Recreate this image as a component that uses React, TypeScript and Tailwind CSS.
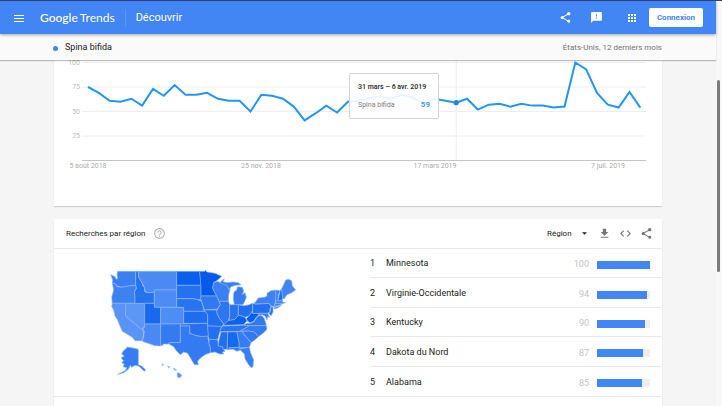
import React, { useState } from "react";

const interest = [
  75, 69, 61, 60, 63, 56, 73, 66, 77, 67, 67, 69, 63, 61, 61, 50, 67, 66, 63, 55, 41, 48, 56, 49, 60, 61,
  64, 65, 63, 67, 64, 58, 63, 61, 59, 63, 52, 57, 58, 55, 58, 56, 56, 54, 55, 100, 93, 69, 57, 54, 70, 54,
];

const regions = [
  { name: "Minnesota", value: 100 },
  { name: "Virginie-Occidentale", value: 94 },
  { name: "Kentucky", value: 90 },
  { name: "Dakota du Nord", value: 87 },
  { name: "Alabama", value: 85 },
];

const axisDates = [
  { label: "5 août 2018", x: 34 },
  { label: "25 nov. 2018", x: 207 },
  { label: "17 mars 2019", x: 381 },
  { label: "7 juil. 2019", x: 554 },
];

// [state, fill, outline]
const states: [string, string, string][] = [
  ["WA", "#3b80f2", "38,34 92,34 92,76 70,78 50,82 36,78 32,72 22,70 23,60 17,44 30,50 34,58 38,54 36,42"],
  ["OR", "#3e82f2", "22,70 32,72 36,80 50,82 70,78 92,76 94,84 88,96 90,106 90,130 22,130 20,112 26,90"],
  ["CA", "#5893f5", "22,130 62,130 62,168 116,214 114,230 112,242 90,242 82,232 66,222 52,214 44,196 38,180 30,168 26,150 20,140"],
  ["NV", "#5c97f6", "62,130 119,130 119,202 113,204 114,212 62,168"],
  ["ID", "#2673f0", "92,34 101,34 101,52 110,66 114,78 118,82 120,96 132,98 148,96 148,130 90,130 90,106 88,96 95,84 92,76"],
  ["MT", "#4b8af2", "101,34 215,34 215,90 148,90 148,97 132,98 122,96 118,82 110,66 101,52"],
  ["WY", "#4c8cf4", "148,90 215,90 215,142 148,142"],
  ["UT", "#176af0", "119,130 148,130 148,142 167,142 167,192 119,192"],
  ["CO", "#4e8df5", "167,142 236,142 236,192 167,192"],
  ["AZ", "#4a89f4", "119,192 167,192 167,258 150,257 112,244 116,230 118,214 113,208 119,202"],
  ["NM", "#347bf2", "167,192 226,192 226,248 192,248 192,252 174,252 174,256 167,256"],
  ["ND", "#0761ee", "215,34 284,34 290,76 215,76"],
  ["SD", "#2472ee", "215,76 290,76 288,84 288,120 275,118 260,116 215,116"],
  ["NE", "#2874ef", "215,116 260,116 275,118 290,124 298,154 236,154 236,142 215,142"],
  ["KS", "#1e6df0", "236,154 302,154 308,164 308,190 236,190"],
  ["OK", "#286ff0", "226,192 308,190 308,200 312,230 290,230 270,226 254,220 254,198 226,198"],
  ["TX", "#347bf2", "226,198 254,198 254,220 270,226 290,230 308,228 312,250 316,262 316,278 300,284 284,296 278,304 280,314 268,314 260,300 248,280 236,276 226,284 214,272 206,260 192,252 192,248 226,248"],
  ["MN", "#0559eb", "284,34 300,34 301,30 306,36 330,40 350,49 338,60 326,68 323,84 326,92 336,108 288,108 288,84"],
  ["IA", "#3279ef", "288,108 336,108 342,124 346,134 336,148 298,150 290,124 287,118"],
  ["WI", "#3b80f2", "326,68 338,64 346,68 362,72 370,80 371,88 376,84 371,104 370,124 342,124 336,110 326,92 323,84"],
  ["MI", "#377df0", "346,66 358,56 354,65 366,68 384,66 400,68 408,74 392,76 378,80 371,88 366,76 346,69"],
  ["MI", "#377df0", "388,134 385,118 386,100 390,92 394,92 398,80 412,82 416,92 412,104 420,98 424,112 418,126 414,134"],
  ["MO", "#1f6fee", "298,150 336,150 336,160 346,178 356,192 350,200 308,198 308,164"],
  ["IL", "#2d76ef", "342,124 370,124 374,134 374,168 370,182 358,194 352,186 344,176 336,160 336,150 346,134"],
  ["IN", "#2973ef", "374,134 400,134 400,166 390,178 372,182 374,168"],
  ["OH", "#2370ee", "400,134 416,137 430,135 443,130 443,152 432,168 420,172 410,168 400,166"],
  ["KY", "#0b62ec", "354,196 370,182 390,178 400,166 410,168 420,172 426,182 416,194"],
  ["WV", "#085fea", "443,152 443,160 464,160 458,168 452,174 446,184 436,188 428,184 424,176 432,168"],
  ["PA", "#236ff0", "443,133 450,128 450,132 492,130 498,140 494,150 496,154 488,160 443,160"],
  ["NY", "#3f81f0", "450,128 460,114 478,112 486,108 486,100 498,92 512,90 513,112 511,126 508,140 498,138 492,130 450,132"],
  ["NY", "#3f81f0", "506,143 524,138 530,135 520,143 508,147"],
  ["NJ", "#2472ee", "498,140 504,142 504,156 498,168 492,160 496,154"],
  ["VT", "#3b80f2", "512,90 525,92 520,104 519,123 512,124"],
  ["NH", "#1c6bea", "525,92 530,86 533,112 532,120 519,123"],
  ["MA", "#4385f4", "511,124 532,120 534,127 542,128 532,131 511,131"],
  ["CT", "#3b80f2", "511,131 530,131 524,136 508,140"],
  ["ME", "#4184f3", "530,86 536,74 542,60 550,58 560,62 562,78 572,90 560,98 546,104 538,116 533,116"],
  ["MD", "#3a7eef", "462,160 488,160 494,172 488,170 486,180 480,168 472,164 464,166"],
  ["VA", "#3279f1", "412,197 426,190 436,190 446,186 454,174 462,166 472,168 478,176 482,188 484,197"],
  ["TN", "#2a74ee", "352,198 416,196 434,197 404,214 342,215"],
  ["NC", "#347af1", "434,197 484,197 486,208 476,218 460,230 448,216 430,213 404,214"],
  ["SC", "#3279f1", "412,214 430,213 448,216 460,230 452,238 438,248 428,236 416,222"],
  ["GA", "#367cf2", "395,215 412,214 416,222 428,236 438,248 433,262 402,264 402,248"],
  ["AL", "#1569ee", "368,216 395,215 402,248 402,262 372,263 374,269 366,268"],
  ["MS", "#2170ee", "348,216 368,216 366,268 354,268 352,260 338,260 342,240"],
  ["AR", "#2470f0", "308,198 350,199 346,210 342,224 338,239 312,238 310,230"],
  ["LA", "#2a73f0", "312,238 338,239 340,258 352,260 354,266 360,274 352,276 356,282 344,282 330,276 316,278 316,262 312,250"],
  ["FL", "#387ef3", "372,263 402,262 404,266 433,262 436,276 446,300 444,320 438,323 428,310 420,296 418,282 406,270 396,274 384,268 372,268"],
  ["AK", "#367cf3", "68,261 84,264 100,268 100,314 110,318 122,330 118,334 102,319 90,316 80,322 76,316 70,328 56,338 38,343 60,332 66,323 54,320 58,312 50,308 56,302 48,294 58,288 50,282 54,274"],
  ["HI", "#5b96f5", "217,338 224,340 231,347 222,354 217,350"],
  ["HI", "#8ab4f8", "205,325 210,326 215,331 209,331"],
  ["HI", "#8ab4f8", "188,319 194,320 192,324"],
  ["HI", "#8ab4f8", "170,312 175,313 173,317"],
];

function ShareIcon({ className }: { className: string }) {
  return (
    <svg viewBox="0 0 24 24" className={className} fill="currentColor" aria-hidden="true">
      <path d="M18 16.08c-.76 0-1.44.3-1.96.77L8.91 12.7c.05-.23.09-.46.09-.7s-.04-.47-.09-.7l7.05-4.11c.54.5 1.25.81 2.04.81 1.66 0 3-1.34 3-3s-1.34-3-3-3-3 1.34-3 3c0 .24.04.47.09.7L8.04 9.81C7.5 9.31 6.79 9 6 9c-1.66 0-3 1.34-3 3s1.34 3 3 3c.79 0 1.5-.31 2.04-.81l7.12 4.16c-.05.21-.08.43-.08.65 0 1.61 1.31 2.92 2.92 2.92s2.92-1.31 2.92-2.92-1.31-2.92-2.92-2.92z" />
    </svg>
  );
}

function InterestChart() {
  const px = (i: number) => 34 + i * 10.83;
  const py = (v: number) => 100.5 - v * 0.98;
  const selected = 34;
  const points = interest.map((v, i) => `${px(i)},${py(v)}`).join(" ");

  return (
    <div className="relative">
      <svg viewBox="0 0 608 146" className="block h-auto w-full font-[Roboto,sans-serif]" role="img" aria-label="Évolution de l'intérêt">
        {[100, 75, 50, 25].map((v) => (
          <g key={v}>
            <line x1="28" x2="592" y1={py(v)} y2={py(v)} stroke="#eeeeee" />
            <text x="26" y={py(v) + 2} textAnchor="end" fontSize="7" fill="#bdbdbd">{v}</text>
          </g>
        ))}
        <line x1="28" x2="592" y1="100.5" y2="100.5" stroke="#c4c4c4" />
        <line x1={px(selected)} x2={px(selected)} y1="0" y2="100" stroke="#eeeeee" />
        <polyline points={points} fill="none" stroke="#2196f3" strokeWidth="2" />
        <circle cx={px(selected)} cy={py(interest[selected])} r="2.6" fill="#1e88e5" />
        {axisDates.map((d) => (
          <text key={d.label} x={d.x} y="108" textAnchor="middle" fontSize="7" fill="#aaaaaa">{d.label}</text>
        ))}
      </svg>
      <div className="absolute left-[295px] top-[13px] flex w-[90px] flex-col gap-2 rounded-[1px] border border-[#d5d5d5] bg-white/90 px-2 py-2 text-[7px] leading-[10px]">
        <span className="whitespace-nowrap font-semibold text-[#333]">31 mars – 6 avr. 2019</span>
        <div className="flex justify-between">
          <span className="text-[#7a7a7a]">Spina bifida</span>
          <span className="text-[8px] font-bold text-[#4a9df5]">59</span>
        </div>
      </div>
    </div>
  );
}

function UsMap() {
  return (
    <svg viewBox="0 0 585 375" className="block h-auto w-[195px]" role="img" aria-label="Carte des États-Unis">
      {states.map(([id, fill, points], i) => (
        <polygon key={`${id}-${i}`} points={points} fill={fill} stroke="#8ab4f8" strokeWidth="2" strokeLinejoin="round" />
      ))}
    </svg>
  );
}

export default function App() {
  const [level, setLevel] = useState("region");

  return (
    <div className="flex h-screen flex-col overflow-hidden border-t border-[#2a4478] bg-[#f5f5f5] font-[Roboto,sans-serif] text-[8px] text-[#212121]">
      <div className="flex min-h-0 flex-1">
        <div className="flex min-w-0 flex-1 flex-col">
          <header className="z-20 flex h-[33px] shrink-0 items-center bg-[#4285f4] pl-3.5 pr-[13px] text-white shadow-[0_1px_3px_rgba(0,0,0,0.35)]">
            <button type="button" aria-label="Menu" className="mr-4 flex w-2.5 flex-col gap-[2px] pt-px">
              <span className="h-px w-full bg-white" />
              <span className="h-px w-full bg-white" />
              <span className="h-px w-full bg-white" />
            </button>
            <a href="#" className="flex gap-[2px] font-[Lato,sans-serif] text-xs">
              <span className="font-medium">Google</span>
              <span>Trends</span>
            </a>
            <span className="mx-2.5 h-[18px] w-px bg-white/15" />
            <a href="#" className="pt-0.5 text-[11px]">Découvrir</a>
            <div className="ml-auto flex items-center">
              <button type="button" aria-label="Partager" className="mr-[18px]">
                <ShareIcon className="size-[13px]" />
              </button>
              <button type="button" aria-label="Envoyer des commentaires" className="mr-[23px]">
                <svg viewBox="0 0 24 24" className="size-[13px]" fill="currentColor" aria-hidden="true">
                  <path d="M20 2H4c-1.1 0-1.99.9-1.99 2L2 22l4-4h14c1.1 0 2-.9 2-2V4c0-1.1-.9-2-2-2zm-7 12h-2v-2h2v2zm0-4h-2V6h2v4z" />
                </svg>
              </button>
              <button type="button" aria-label="Applications Google" className="mr-[11px]">
                <svg viewBox="0 0 24 24" className="size-3" fill="currentColor" aria-hidden="true">
                  <path d="M4 8h4V4H4v4zm6 12h4v-4h-4v4zm-6 0h4v-4H4v4zm0-6h4v-4H4v4zm6 0h4v-4h-4v4zm6-10v4h4V4h-4zm-6 4h4V4h-4v4zm6 6h4v-4h-4v4zm0 6h4v-4h-4v4z" />
                </svg>
              </button>
              <button type="button" className="h-[19px] w-[54px] rounded-[2px] bg-white text-[8px] font-bold text-[#4285f4]">
                Connexion
              </button>
            </div>
          </header>

          <div className="z-10 flex h-[26px] shrink-0 items-center justify-between bg-[#fafafa] pl-[53px] pr-[54px] pt-0.5 shadow-[0_1px_1px_rgba(0,0,0,0.25)]">
            <div className="flex items-center gap-[7px]">
              <span className="size-[5px] rounded-full bg-[#4285f4]" />
              <span className="text-[9px]">Spina bifida</span>
            </div>
            <span className="text-[#757575]">États-Unis, 12 derniers mois</span>
          </div>

          <main className="flex min-h-0 flex-1 flex-col gap-[13px] px-[54px]">
            <section className="shrink-0 bg-white shadow-[0_1px_1px_rgba(0,0,0,0.15)]">
              <InterestChart />
            </section>

            <section className="shrink-0 bg-white pb-6 shadow-[0_1px_1px_rgba(0,0,0,0.15)]">
              <div className="flex h-[30px] items-center border-b border-[#e8e8e8] pl-3 pr-[9px]">
                <h2>Recherches par région</h2>
                <button type="button" aria-label="Aide" className="ml-2 text-[#b5b5b5]">
                  <svg viewBox="0 0 24 24" className="size-[13px]" fill="currentColor" aria-hidden="true">
                    <path d="M11 18h2v-2h-2v2zm1-16C6.48 2 2 6.48 2 12s4.48 10 10 10 10-4.48 10-10S17.52 2 12 2zm0 18c-4.41 0-8-3.59-8-8s3.59-8 8-8 8 3.59 8 8-3.59 8-8 8zm0-14c-2.21 0-4 1.79-4 4h2c0-1.1.9-2 2-2s2 .9 2 2c0 2-3 1.75-3 5h2c0-2.25 3-2.5 3-5 0-2.21-1.79-4-4-4z" />
                  </svg>
                </button>
                <div className="ml-auto flex items-center text-[#757575]">
                  <div className="mr-[11px] flex items-center text-[#212121]">
                    <select
                      aria-label="Niveau géographique"
                      value={level}
                      onChange={(e) => setLevel(e.target.value)}
                      className="w-[35px] appearance-none bg-transparent"
                    >
                      <option value="region">Région</option>
                      <option value="metro">Métropole</option>
                      <option value="city">Ville</option>
                    </select>
                    <svg viewBox="0 0 10 5" className="h-[3px] w-[5px]" fill="currentColor" aria-hidden="true">
                      <path d="M0 0h10L5 5z" />
                    </svg>
                  </div>
                  <button type="button" aria-label="Télécharger" className="mr-2">
                    <svg viewBox="0 0 24 24" className="size-[13px]" fill="currentColor" aria-hidden="true">
                      <path d="M19 9h-4V3H9v6H5l7 7 7-7zM5 18v2h14v-2H5z" />
                    </svg>
                  </button>
                  <button type="button" aria-label="Intégrer" className="mr-2">
                    <svg viewBox="0 0 24 24" className="size-[13px]" fill="currentColor" aria-hidden="true">
                      <path d="M9.4 16.6L4.8 12l4.6-4.6L8 6l-6 6 6 6 1.4-1.4zm5.2 0l4.6-4.6-4.6-4.6L16 6l6 6-6 6-1.4-1.4z" />
                    </svg>
                  </button>
                  <button type="button" aria-label="Partager la carte">
                    <ShareIcon className="size-[13px]" />
                  </button>
                </div>
              </div>

              <div className="flex h-[148px] border-b border-[#e8e8e8]">
                <div className="flex min-w-0 flex-1 items-start pl-[51px] pt-[11px]">
                  <UsMap />
                </div>
                <ol className="grid w-[292px] grid-rows-5 divide-y divide-[#e8e8e8] text-[9px]">
                  {regions.map((r, i) => (
                    <li key={r.name} className="flex items-center pr-3 pt-0.5">
                      <span className="w-4">{i + 1}</span>
                      <span className="flex-1">{r.name}</span>
                      <span className="mr-2 pt-0.5 text-[#c4c4c4]">{r.value}</span>
                      <div className="mt-0.5 h-2 w-[53px] bg-[#eeeeee]">
                        <div className="h-full bg-[#4285f4]" style={{ width: `${r.value}%` }} />
                      </div>
                    </li>
                  ))}
                </ol>
              </div>
            </section>
          </main>
        </div>

        {/* Scroll track */}
        <div className="w-1.5 shrink-0 bg-[#f8f8f8] px-px pt-[79px]">
          <div className="h-48 w-[3px] rounded-full bg-[#7b7b7b]" />
        </div>
      </div>
    </div>
  );
}
